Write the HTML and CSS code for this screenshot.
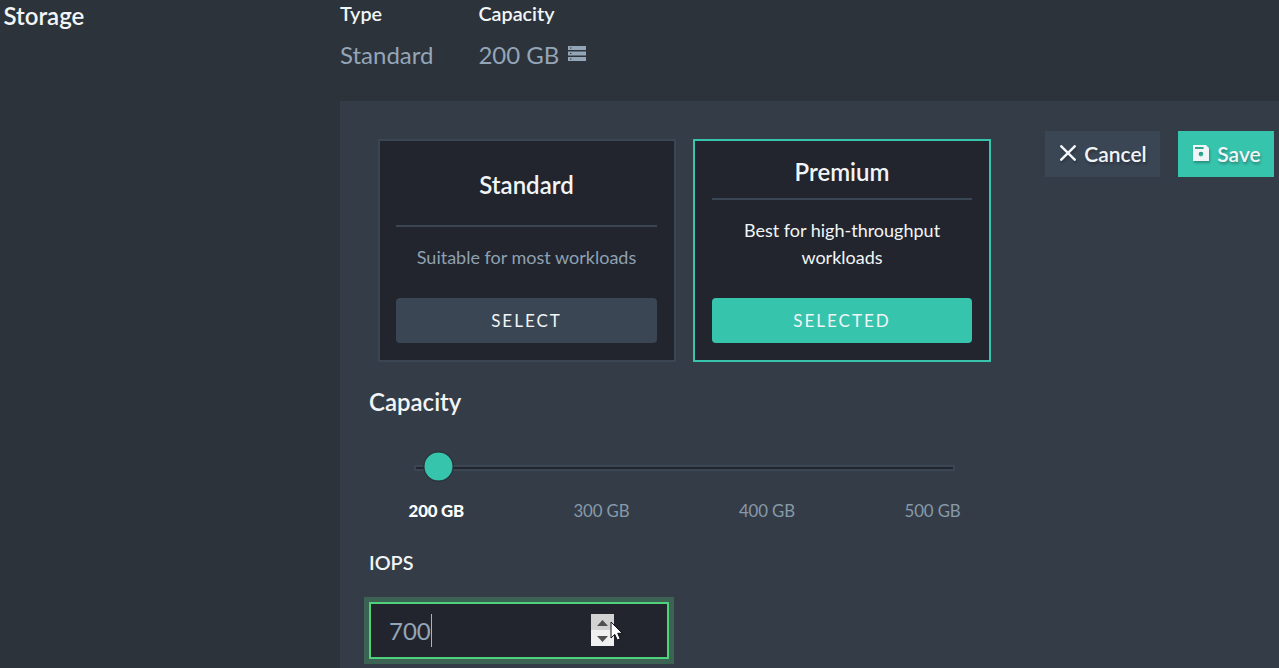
FILE: index.html
```html
<!DOCTYPE html>
<html lang="en">
<head>
<meta charset="utf-8">
<title>Storage</title>
<link rel="stylesheet" href="styles.css">
</head>
<body>
<main class="page">
  <h2 class="section-title">Storage</h2>
  <section class="content">
    <dl class="summary">
      <div class="summary-type"><dt>Type</dt><dd>Standard</dd></div>
      <div><dt>Capacity</dt><dd>200 GB
        <svg class="disk-icon" viewBox="0 0 18 15" width="18" height="15"><path fill="currentColor" fill-rule="evenodd" d="M0 0h18v4H0zM2 1.4v1.2h1.4V1.4zM0 5.5h18v4H0zM2 6.9v1.2h1.4V6.9zM0 11h18v4H0zM2 12.4v1.2h1.4v-1.2z"/></svg></dd></div>
    </dl>
    <div class="panel">
      <div class="form">
        <div class="cards">
          <article class="card">
            <h3>Standard</h3>
            <p>Suitable for most workloads</p>
            <button>SELECT</button>
          </article>
          <article class="card selected">
            <h3>Premium</h3>
            <p>Best for high-throughput workloads</p>
            <button>SELECTED</button>
          </article>
        </div>
        <h3 class="capacity-title">Capacity</h3>
        <div class="slider"><span class="thumb"></span></div>
        <div class="ticks"><b>200 GB</b><span>300 GB</span><span>400 GB</span><span>500 GB</span></div>
        <h4 class="iops-title">IOPS</h4>
        <div class="number-field">
          <span class="value">700</span><span class="caret"></span>
          <span class="spinner">
            <span class="up"><svg width="11" height="6" viewBox="0 0 11 6"><path d="M0 6 5.5 0 11 6z"/></svg></span>
            <span class="down"><svg width="11" height="6" viewBox="0 0 11 6"><path d="M0 0 5.5 6 11 0z"/></svg></span>
            <svg class="pointer" width="13" height="20" viewBox="0 0 13 20"><path d="M1 1v16l3.8-3.6 2.5 5.7 2.9-1.3-2.5-5.5h4.6z" fill="#fff" stroke="#111"/></svg>
          </span>
        </div>
      </div>
      <div class="actions">
        <button class="cancel"><svg width="16" height="16" viewBox="0 0 16 16"><path d="M1.3 1.3 14.7 14.7M14.7 1.3 1.3 14.7" stroke="currentColor" stroke-width="2.5" stroke-linecap="round"/></svg>Cancel</button>
        <button class="save"><svg width="16" height="16" viewBox="0 0 16 16"><path fill="currentColor" fill-rule="evenodd" d="M.6 0H13l3 3v12.4a.6.6 0 0 1-.6.6H.6a.6.6 0 0 1-.6-.6V.6A.6.6 0 0 1 .6 0zM2 2v2h8.6V2zM8 6.8a2.3 2.3 0 1 0 0 4.6 2.3 2.3 0 0 0 0-4.6z"/></svg>Save</button>
      </div>
    </div>
  </section>
</main>
</body>
</html>
```
FILE: styles.css
```css
* { box-sizing: border-box; }
body, h2, h3, h4, p, dl, dd { margin: 0; }
body {
  background: #2c333a;
  color: #f2f5f7;
  font-family: Lato, sans-serif;
  overflow: hidden;
}
button { border: 0; color: inherit; font-family: inherit; }
.page { display: grid; grid-template-columns: 340px 1fr; height: 668px; }
.section-title { padding: 1px 0 0 3.5px; font-size: 24px; line-height: 30px; font-weight: 600; }
.content { display: flex; flex-direction: column; }
.summary { display: flex; height: 101px; flex: none; }
.summary-type { width: 138.4px; }
.summary dt { padding-top: 1px; font-size: 19.8px; line-height: 24px; font-weight: 600; }
.summary dd { margin-top: 15px; font-size: 24px; line-height: 30px; color: #94a5b8; }
.disk-icon { margin-left: 2.4px; vertical-align: 3px; }
.panel {
  display: flex;
  justify-content: space-between;
  flex: 1;
  padding: 30px 5px 0 24px;
  background: #343d47;
}
.form { padding-left: 5px; width: 627px; }
.cards { display: flex; gap: 17px; padding: 8px 0 0 9px; }
.card {
  display: flex;
  flex-direction: column;
  width: 298px;
  height: 223px;
  padding: 0 17px 17px 16px;
  flex: none;
  border: 2px solid #3b4654;
  background: #22252d;
  text-align: center;
}
.card h3 {
  flex: 1;
  display: flex;
  align-items: center;
  justify-content: center;
  padding-top: 3px;
  border-bottom: 2px solid #3b4654;
  font-size: 24px;
  font-weight: 600;
}
.card p { padding: 17px 20px 27px; font-size: 18px; line-height: 27px; color: #8fa1b2; }
.card:first-child p { padding-left: 0; padding-right: 0; }
.card button { height: 45px; border-radius: 4px; background: #3b4654; font-size: 17px; letter-spacing: 2px; }
.card.selected { padding-left: 17px; border-color: #37c4ad; }
.card.selected p { color: #f2f5f7; }
.card.selected button { background: #37c4ad; }
.capacity-title { margin-top: 25px; font-size: 24px; line-height: 30px; font-weight: 600; }
.slider {
  position: relative;
  width: 541px;
  height: 6px;
  margin: 48px 0 0 45px;
  border: 2px solid #3b4654;
  background: #22252d;
}
.thumb {
  position: absolute;
  left: 7px;
  top: -16px;
  width: 31px;
  height: 31px;
  border: 1px solid #2b3038;
  border-radius: 50%;
  background: #37c4ad;
  background-clip: padding-box;
  box-shadow: inset 0 0 0 .5px #2b3038;
}
.ticks {
  display: flex;
  justify-content: space-between;
  width: 552px;
  margin: 29px 0 0 39.6px;
  font-size: 16.8px;
  line-height: 22px;
  letter-spacing: -.1px;
  color: #8799aa;
}
.ticks b { color: #fff; font-weight: 900; letter-spacing: -.2px; }
.iops-title { margin-top: 28px; font-size: 19.8px; line-height: 24px; font-weight: 600; }
.number-field {
  display: flex;
  align-items: center;
  width: 300px;
  height: 57px;
  margin-top: 28px;
  padding: 0 53px 0 18px;
  border: 2px solid #4fd07b;
  background: #22252d;
  box-shadow: 0 0 0 5px #3b6253;
  color: #94a5b8;
  font-size: 24px;
}
.caret { width: 1px; height: 33px; background: #a4b4c5; }
.spinner { position: relative; display: grid; grid-template-rows: 16px 16px; width: 23px; margin: 0 0 1px auto; }
.spinner > span { display: grid; place-items: center; padding-top: 1px; }
.spinner > span path { fill: #505050; }
.up { background: #d2d2d2; }
.down { background: #f0f0f0; }
.pointer { position: absolute; left: 19px; top: 7px; }
.actions { display: flex; align-items: flex-start; gap: 18px; }
.actions button {
  display: flex;
  align-items: center;
  justify-content: center;
  height: 46px;
  padding: 0 0 2px 2px;
  gap: 8px;
  font-size: 21px;
  font-weight: 600;
  text-shadow: 1px 2px 3px #0005;
}
.actions svg { margin-bottom: 1px; filter: drop-shadow(1px 2px 1px #0004); }
.cancel { width: 115px; background: #3b4654; }
.save { width: 96px; background: #37c4ad; }
```
